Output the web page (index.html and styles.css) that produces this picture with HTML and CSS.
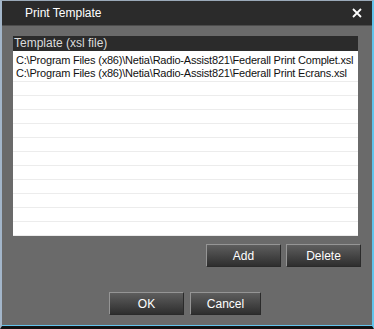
FILE: index.html
```html
<!DOCTYPE html>
<html lang="en">
<head>
  <meta charset="UTF-8" />
  <title>Print Template</title>
  <link rel="stylesheet" href="styles.css">
</head>
<body>
  <div class="window">
    <div class="titlebar">
      <span class="title">Print Template</span>
      <span class="close">
        <svg width="10" height="10" viewBox="0 0 10 10"><path d="M1 1 L9 9 M9 1 L1 9" stroke="#fff" stroke-width="1.8" /></svg>
      </span>
    </div>
    <div class="content">
      <div class="list">
        <div class="list-header">Template (xsl file)</div>
        <div class="list-body">
          <div class="row">C:\Program Files (x86)\Netia\Radio-Assist821\Federall Print Complet.xsl</div>
          <div class="row">C:\Program Files (x86)\Netia\Radio-Assist821\Federall Print Ecrans.xsl</div>
        </div>
      </div>
      <div class="actions">
        <button class="btn">Add</button>
        <button class="btn">Delete</button>
      </div>
      <div class="footer">
        <button class="btn">OK</button>
        <button class="btn btn-narrow">Cancel</button>
      </div>
    </div>
  </div>
</body>
</html>
```

FILE: styles.css
```css
* {
  box-sizing: border-box;
}
body {
  margin: 0;
  background: #000;
  font-family: 'Liberation Sans', Arial, sans-serif;
}
.window {
  width: 374px;
  height: 329px;
  background: #6a6a6a;
  border-top: 1px solid #9aa9b8;
  border-left: 2px solid #a3b6ca;
  border-right: 2px solid #62c4ec;
  border-bottom: 3px solid #111;
  box-shadow: inset 0 -1px 0 #62c4ec;
}
.titlebar {
  height: 25px;
  background: #2b2b2b;
  border-bottom: 1px solid #4c4c4c;
  display: flex;
  align-items: center;
  justify-content: space-between;
  padding: 0 10px 0 23px;
  color: #fff;
  font-size: 12px;
}
.close {
  display: flex;
}
.content {
  padding: 10px 11px 0 11px;
}
.list {
  width: 345px;
  height: 200px;
  background: #fff;
  display: flex;
  flex-direction: column;
}
.list-header {
  height: 15px;
  background: #2b2b2b;
  color: #dcdcdc;
  font-size: 12px;
  line-height: 15px;
  padding-left: 1px;
}
.list-body {
  flex: 1;
  padding-top: 3px;
  background: repeating-linear-gradient(#fff 0, #fff 13px, #ececec 13px, #ececec 14px);
  background-position: 0 3px;
  overflow: hidden;
}
.row {
  height: 13px;
  line-height: 13px;
  background: #fff;
  font-size: 11px;
  letter-spacing: -0.2px;
  color: #111;
  padding-left: 3px;
  white-space: nowrap;
  overflow: hidden;
}
.actions {
  display: flex;
  justify-content: flex-end;
  gap: 5px;
  margin-top: 8px;
}
.footer {
  display: flex;
  justify-content: center;
  gap: 6px;
  margin-top: 25px;
  padding-right: 4px;
}
.btn {
  width: 75px;
  height: 23px;
  padding: 0;
  font-family: inherit;
  font-size: 12px;
  color: #fff;
  background: linear-gradient(#5e5e5e, #2e2e2e);
  border: 1px solid #2a2a2a;
  border-top-color: #959595;
  border-left-color: #959595;
}
.btn-narrow {
  width: 71px;
}
```
